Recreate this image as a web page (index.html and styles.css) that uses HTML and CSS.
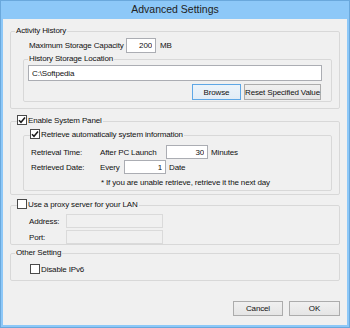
FILE: index.html
```html
<!DOCTYPE html>
<html lang="en">
<head>
    <meta charset="UTF-8">
    <meta name="viewport" content="width=device-width, initial-scale=1.0">
    <title>Advanced Settings</title>
    <link rel="stylesheet" href="styles.css">
</head>
<body>
    <div class="window">
        <div class="titlebar">Advanced Settings</div>

        <div class="client">
            <fieldset class="group">
                <legend>Activity History</legend>
                <div class="row capacity">
                    <label class="cap-label">Maximum Storage Capacity</label>
                    <input type="text" class="text num cap-input" value="200">
                    <span class="unit">MB</span>
                </div>

                <fieldset class="group inner location">
                    <legend>History Storage Location</legend>
                    <input type="text" class="text path" value="C:\Softpedia">
                    <div class="btn-row">
                        <button class="btn default browse">Browse</button>
                        <button class="btn reset">Reset Specified Value</button>
                    </div>
                </fieldset>
            </fieldset>

            <fieldset class="group system">
                <legend class="check-legend">
                    <span class="check"><svg viewBox="0 0 8 8" width="8" height="8"><path d="M1 4.2 L3 6.3 L7 1.5" fill="none" stroke="#1a1a1a" stroke-width="1.5"/></svg></span><span class="check-text">Enable System Panel</span>
                </legend>

                <fieldset class="group inner retrieve">
                    <legend class="check-legend">
                        <span class="check"><svg viewBox="0 0 8 8" width="8" height="8"><path d="M1 4.2 L3 6.3 L7 1.5" fill="none" stroke="#1a1a1a" stroke-width="1.5"/></svg></span><span class="check-text">Retrieve automatically system information</span>
                    </legend>
                    <div class="row field-row first">
                        <span class="field-label">Retrieval Time:</span>
                        <span class="prefix launch">After PC Launch</span>
                        <input type="text" class="text num short" value="30">
                        <span class="suffix">Minutes</span>
                    </div>
                    <div class="row field-row">
                        <span class="field-label">Retrieved Date:</span>
                        <span class="prefix every">Every</span>
                        <input type="text" class="text num short" value="1">
                        <span class="suffix">Date</span>
                    </div>
                    <p class="note">* If you are unable retrieve, retrieve it the next day</p>
                </fieldset>
            </fieldset>

            <fieldset class="group proxy">
                <legend class="check-legend">
                    <span class="check"></span><span class="check-text">Use a proxy server for your LAN</span>
                </legend>
                <div class="row proxy-row first">
                    <span class="proxy-label">Address:</span>
                    <input type="text" class="text wide" disabled>
                </div>
                <div class="row proxy-row">
                    <span class="proxy-label">Port:</span>
                    <input type="text" class="text wide" disabled>
                </div>
            </fieldset>

            <fieldset class="group other">
                <legend>Other Setting</legend>
                <div class="row check-row">
                    <span class="check"></span><span class="check-text">Disable IPv6</span>
                </div>
            </fieldset>

            <div class="footer">
                <button class="btn cancel">Cancel</button>
                <button class="btn ok">OK</button>
            </div>
        </div>
    </div>
</body>
</html>
```

FILE: styles.css
```css
:root {
    --frame: #8dc8f8;
    --frame-edge: #6aa8dc;
    --face: #f0f0f0;
    --group-line: #d8d8d8;
    --edit-line: #abadb3;
}

* {
    margin: 0;
    padding: 0;
    box-sizing: border-box;
}

body {
    font-family: "Liberation Sans", Arial, sans-serif;
    font-size: 8px;
    letter-spacing: -0.15px;
    color: #111;
    background-color: var(--frame);
    white-space: nowrap;
}

.window {
    width: 350px;
    height: 328px;
    border: 1px solid var(--frame-edge);
    background-color: var(--frame);
    padding: 0 2px 2px;
    display: flex;
    flex-direction: column;
}

.titlebar {
    height: 18px;
    line-height: 17px;
    text-align: center;
    font-size: 10.5px;
    letter-spacing: 0;
    color: #222;
}

.client {
    flex: 1;
    background-color: var(--face);
    padding: 6px 7px 0;
    display: flex;
    flex-direction: column;
}

/* group boxes */
.group {
    border: 1px solid var(--group-line);
    border-radius: 2px;
    min-width: 0;
}

.group legend {
    line-height: 12px;
    padding: 0 1px;
    margin-left: 4px;
}

.group .check-legend {
    margin-left: 6px;
    padding: 0 1px 0 0;
}

.group.inner {
    margin: 0 7px 6px 12px;
}

.system {
    margin-top: 6px;
}

.group.inner.retrieve {
    margin-bottom: 3px;
    margin-top: 2px;
    padding-bottom: 1px;
}

.location {
    padding-bottom: 1px;
}

.proxy {
    margin-top: 4px;
}

.other {
    margin-top: 2px;
    padding-bottom: 5px;
}

/* rows */
.row {
    display: flex;
    align-items: center;
}

.capacity {
    margin-top: 1px;
    padding-left: 18px;
    height: 15px;
}

.cap-label {
    width: 97px;
}

.unit {
    margin-left: 4px;
}

.field-row {
    padding-left: 7px;
    height: 14px;
    margin-top: 1px;
}

.field-row.first {
    margin-top: 4px;
}

.field-label {
    width: 69px;
}

.prefix.launch {
    width: 66px;
}

.prefix.every {
    width: 24px;
}

.suffix {
    margin-left: 3px;
}

.note {
    margin-top: 3px;
    padding-left: 77px;
    line-height: 12px;
}

.proxy-row {
    padding-left: 18px;
    height: 14px;
    margin-top: 2px;
}

.proxy-row.first {
    margin-top: 3px;
}

.proxy-label {
    width: 37px;
}

.check-row {
    margin-top: 5px;
    padding-left: 19px;
    height: 11px;
}

/* checkboxes */
.check {
    display: inline-block;
    width: 10px;
    height: 10px;
    border: 1px solid #4a4a4a;
    background-color: #fff;
    vertical-align: middle;
    position: relative;
    top: -1px;
}

.check svg {
    display: block;
}

.check-text {
    margin-left: 1px;
}

/* edits */
.text {
    font-family: inherit;
    font-size: 8px;
    letter-spacing: -0.15px;
    border: 1px solid var(--edit-line);
    background-color: #fff;
    padding: 0 3px;
    outline: none;
    color: #111;
}

.text.num {
    text-align: right;
}

.cap-input {
    width: 30px;
    height: 15px;
}

.path {
    display: block;
    margin-left: 4px;
    width: 294px;
    height: 16px;
}

.short {
    width: 42px;
    height: 14px;
}

.wide {
    width: 97px;
    height: 14px;
}

.text:disabled {
    background-color: var(--face);
    border-color: #dadada;
}

/* buttons */
.btn-row {
    display: flex;
    justify-content: flex-end;
    gap: 3px;
    margin-top: 3px;
    padding-right: 10px;
}

.btn {
    font-family: inherit;
    font-size: 8px;
    letter-spacing: -0.15px;
    color: #111;
    height: 16px;
    padding: 0;
    white-space: nowrap;
    border: 1px solid #acacac;
    background: linear-gradient(#f0f0f0, #e5e5e5);
    cursor: pointer;
}

.btn.default {
    border-color: #5ea7e6;
    background: linear-gradient(#ecf3fa, #e2ecf6);
}

.browse {
    width: 49px;
}

.reset {
    width: 77px;
}

.footer {
    display: flex;
    justify-content: flex-end;
    gap: 6px;
    margin-top: 20px;
}

.footer .btn {
    height: 15px;
}

.cancel {
    width: 50px;
}

.ok {
    width: 51px;
}
```
